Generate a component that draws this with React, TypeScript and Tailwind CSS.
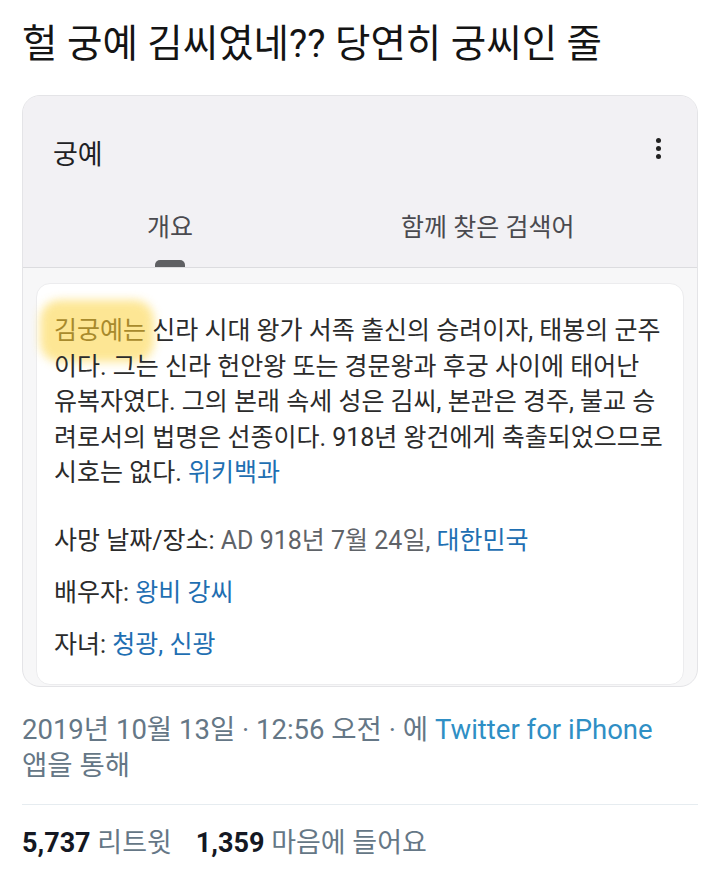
import React from "react";

const font = "font-['Roboto','Noto_Sans_CJK_KR',sans-serif]";

const bodyLines = [
  "신라 시대 왕가 서족 출신의 승려이자, 태봉의 군주",
  "이다. 그는 신라 헌안왕 또는 경문왕과 후궁 사이에 태어난",
  "유복자였다. 그의 본래 속세 성은 김씨, 본관은 경주, 불교 승",
  "려로서의 법명은 선종이다. 918년 왕건에게 축출되었으므로",
];

const App = () => {
  return (
    <div className={`w-[720px] h-[880px] bg-white overflow-hidden ${font}`}>
      <h1 className="pl-[22px] pt-[20px] text-[38.5px] leading-[48px] text-[#141414] whitespace-nowrap">
        헐 궁예 김씨였네?? 당연히 궁씨인 줄
      </h1>

      {/* search card */}
      <div className="mx-[22px] mt-[27px] rounded-[18px] border border-[#e4e4e7] bg-[#f7f7f8] overflow-hidden">
        <div className="bg-[#f2f1f4] pt-[41px] border-b border-[#dcdcdf]">
          <div className="flex items-start justify-between pl-[30px] pr-[36px]">
            <span className="text-[27px] leading-[36px] text-[#202124]">궁예</span>
            <div className="flex flex-col gap-[3px] mt-[1px]">
              <span className="w-[5px] h-[5px] rounded-full bg-[#222]" />
              <span className="w-[5px] h-[5px] rounded-full bg-[#222]" />
              <span className="w-[5px] h-[5px] rounded-full bg-[#222]" />
            </div>
          </div>
          <div className="flex mt-[39px] text-[25px] leading-[32px] text-[#4a4a4f]">
            <div className="w-[294px] flex flex-col items-center">
              <span>개요</span>
              <span className="mt-[16px] w-[30px] h-[7px] rounded-t-[5px] bg-[#5f6063]" />
            </div>
            <div className="ml-[84px] whitespace-nowrap">
              <span>함께 찾은 검색어</span>
            </div>
          </div>
        </div>

        <div className="px-[13px] pt-[15px] pb-[1px]">
          <div className="relative rounded-[14px] border border-[#ececee] bg-white pl-[17px] pr-[10px] pt-[29px] pb-[22px] text-[25px] text-[#2b2b2b] whitespace-nowrap">
            <div className="absolute left-[3px] top-[16px] w-[114px] h-[62px] rounded-[20px] bg-[#fde489] blur-[5px] opacity-90" />
            <div className="relative leading-[35.5px]">
              <div>
                <span className="text-[#a88a2c]">김궁예는</span> {bodyLines[0]}
              </div>
              {bodyLines.slice(1).map((line, i) => (
                <div key={i}>{line}</div>
              ))}
              <div>
                시호는 없다. <span className="text-[#1f6fb2]">위키백과</span>
              </div>
            </div>
            <div className="relative mt-[33px] flex flex-col gap-[18px] leading-[34px]">
              <div>
                사망 날짜/장소: <span className="text-[#5f6368]">AD 918년 7월 24일, </span>
                <span className="text-[#1f6fb2]">대한민국</span>
              </div>
              <div>
                배우자: <span className="text-[#1f6fb2]">왕비 강씨</span>
              </div>
              <div>
                자녀: <span className="text-[#1f6fb2]">청광, 신광</span>
              </div>
            </div>
          </div>
        </div>
      </div>

      {/* tweet meta */}
      <div className="px-[22px] pt-[25px] text-[27.5px] leading-[36px] text-[#657786] whitespace-nowrap">
        2019년 10월 13일 · 12:56 오전 · 에{" "}
        <span className="text-[#2f8fc5]">Twitter for iPhone</span>
        <br />앱을 통해
      </div>
      <div className="mx-[22px] mt-[20px] border-t border-[#e6ecf0]" />
      <div className="px-[22px] pt-[20px] text-[27px] leading-[36px] text-[#657786] whitespace-nowrap">
        <span className="font-bold text-[#141823]">5,737</span> 리트윗
        <span className="ml-[24px] font-bold text-[#141823]">1,359</span> 마음에 들어요
      </div>
    </div>
  );
};

export default App;
